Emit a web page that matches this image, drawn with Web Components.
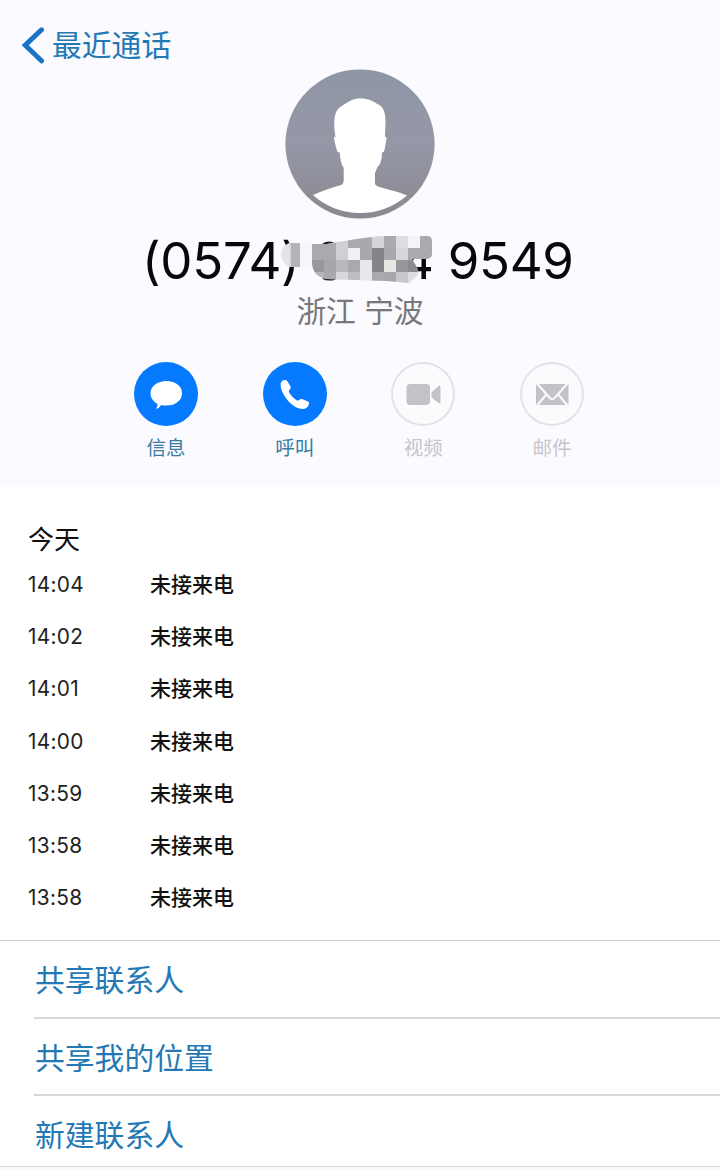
<!DOCTYPE html>
<html lang="zh-CN">
<head>
<meta charset="utf-8">
<title>最近通话</title>
<style>
    html{
        --themeColor:#2478b4;
        --lineColor:#d9d9db;
        font-family:Inter,"Noto Sans CJK SC",sans-serif;
        color:#111;
    }
    body{
        margin:0;
        background:#fff;
    }
</style>
</head>
<body>
<contact-page>
    <contact-header slot="header" place="浙江 宁波">
        <nav-back slot="nav">最近通话</nav-back>
        <contact-number slot="number"></contact-number>
        <contact-action slot="actions" icon="message">信息</contact-action>
        <contact-action slot="actions" icon="phone">呼叫</contact-action>
        <contact-action slot="actions" icon="video" disabled>视频</contact-action>
        <contact-action slot="actions" icon="mail" disabled>邮件</contact-action>
    </contact-header>
    <call-log day="今天">
        <call-item time="14:04">未接来电</call-item>
        <call-item time="14:02">未接来电</call-item>
        <call-item time="14:01">未接来电</call-item>
        <call-item time="14:00">未接来电</call-item>
        <call-item time="13:59">未接来电</call-item>
        <call-item time="13:58">未接来电</call-item>
        <call-item time="13:58">未接来电</call-item>
    </call-log>
    <menu-list slot="footer">
        <menu-item>共享联系人</menu-item>
        <menu-item>共享我的位置</menu-item>
        <menu-item>新建联系人</menu-item>
    </menu-list>
</contact-page>

<script>
class ContactPage extends HTMLElement {

    constructor() {
        super();
        const shadowRoot = this.attachShadow({ mode: 'open' });
        shadowRoot.innerHTML = `
        <style>
        :host{
            display:flex;
            flex-direction:column;
            width:720px;
            height:1170px;
            overflow:hidden;
        }
        main{
            flex:1;
        }
        </style>
        <slot name="header"></slot>
        <main><slot></slot></main>
        <slot name="footer"></slot>
        `
    }
}

class NavBack extends HTMLElement {

    constructor() {
        super();
        const shadowRoot = this.attachShadow({ mode: 'open' });
        shadowRoot.innerHTML = `
        <style>
        :host{
            display:flex;
            align-items:center;
            gap:6px;
            padding:26px 0 0 22px;
            height:38px;
            font-size:29.8px;
            line-height:40px;
            color:var(--themeColor);
        }
        svg{
            display:block;
        }
        </style>
        <svg width="24" height="38" viewBox="0 0 24 38"><path d="M19.5 3.8 3.2 19.200 19.5 34.800" fill="none" stroke="#1b72c8" stroke-width="5" stroke-linecap="round" stroke-linejoin="miter"/></svg>
        <span><slot></slot></span>
        `
    }
}

class ContactHeader extends HTMLElement {

    constructor() {
        super();
        const shadowRoot = this.attachShadow({ mode: 'open' });
        shadowRoot.innerHTML = `
        <style>
        :host{
            display:flex;
            flex-direction:column;
            height:486px;
            background:#fafaff;
        }
        .avatar{
            display:block;
            margin:5px auto 0;
        }
        .place{
            margin-top:2px;
            height:40px;
            font-size:29.7px;
            line-height:40px;
            text-align:center;
            color:#777779;
        }
        .actions{
            display:flex;
            justify-content:center;
            gap:64.6px;
            margin:31px 2px 0 0;
        }
        </style>
        <slot name="nav"></slot>
        <svg class="avatar" width="150" height="150" viewBox="0 0 150 150">
            <defs>
                <linearGradient id="bg" x1="0" y1="0" x2="0" y2="1">
                    <stop offset="0" stop-color="#8e96a5"/>
                    <stop offset=".5" stop-color="#9697a7"/>
                    <stop offset="1" stop-color="#89898f"/>
                </linearGradient>
            </defs>
            <circle cx="75" cy="75" r="74.6" fill="url(#bg)"/>
            <path fill="#fff" d="M76 29.5C83 29.5 88 32 92 34.800C98 37 100.500 43 100.500 52L100 68Q102 67 101.400 70L99.600 80.500Q99.200 83.500 97 83.500C96.800 90 96 95 92.500 98L90 104V115Q91 117 96 118.500C106 121 115 123.500 122 126.500C109 138 93 144 75 144C57 144 40 137 28 126C36 122 46 119 56 116Q58.500 115 58.700 112V99C56 95 55.200 90 54.800 83.500Q52 83.500 51.500 80L49 70Q48.500 67 50.500 68C49 58 48.500 50 51 43.500C53 38 60 35 64 32.500C68 30 72 29.500 76 29.500Z"/>
        </svg>
        <slot name="number"></slot>
        <div class="place"></div>
        <div class="actions"><slot name="actions"></slot></div>
        `
    }

    connectedCallback() {
        this.shadowRoot.querySelector('.place').textContent = this.getAttribute('place');
    }
}

// phone number with the middle digits pixelated
class ContactNumber extends HTMLElement {

    constructor() {
        super();
        const rows = [
            ['#aaa9ad', '#aaa9ad', '#d0cfd3', '#aaa9ad', '#a9a8ac', '#d5d4d8', '#aaa9ad', '#dddce0', '#f4f4f8', '#aaa9ad'],
            ['#aaa9ad', '#aaa9ad', '#d0cfd3', '#f1f1f3', '#a9a8ac', '#858488', '#a9a8ac', '#d8d7db', '#aaa9ad', '#a9a8ac'],
            ['#98979b', '#a7a6aa', '#b9b8bc', '#aaa9ad', '#e8e7eb', '#858488', '#e6e6e3', '#98979b', '#8c8b8f', ''],
            ['#b5b4b8', '#aaa9ad', '#d8d7db', '#bdbcc0', '#e8e7eb', '#aaa9ad', '#a8a7ab', '#c8c7cb', '#dddce0', '']
        ];
        // cells start at 312,236 on the page
        const cells = rows.map((row, y) => row.map((color, x) => color ? `<rect x="${31 + x * 12}" y="${1 + y * 12}" width="12.2" height="12.2" fill="${color}"/>` : '').join('')).join('');
        const shadowRoot = this.attachShadow({ mode: 'open' });
        shadowRoot.innerHTML = `
        <style>
        :host{
            display:block;
            position:relative;
            height:70px;
            font-size:51px;
            line-height:84px;
            color:#08080a;
            white-space:nowrap;
        }
        .number{
            display:flex;
            padding-left:142px;
        }
        .area{
            width:160px;
            letter-spacing:-.3px;
        }
        .last{
            margin-left:99px;
            letter-spacing:-.3px;
        }
        .mosaic{
            position:absolute;
            left:281px;
            top:16px;
        }
        </style>
        <div class="number"><span class="area">(0574)</span><span class="last">4 9549</span></div>
        <svg class="mosaic" width="156" height="50" viewBox="0 0 156 50">
            <defs><clipPath id="smear"><path d="M31 9H46C64 6 84 2 104 1H146Q151 1 151 6V19Q151 24 144 24H131L137 34V40L128 48L106 46 46 44Q32 42 31 28Z"/></clipPath></defs>
            <path d="M42 9.500Q47 6.500 52 8.500M42 43Q47 45.500 54 43.500" fill="none" stroke="#222" stroke-width="2.4"/>
            <path d="M8 8H19V32H8Q0 28 0 20Q0 11 8 8Z" fill="#e5e4e8"/>
            <path d="M8 8H19V32H8Z" fill="#d8d7db"/>
            <path d="M10 8H19V32H10Z" fill="#b4b3b7"/>
            <path d="M19 8H31V32H19Z" fill="#f5f5fa"/>
            <g clip-path="url(#smear)"><rect x="31" width="102" height="50" fill="#e2e1e5"/>${cells}</g>
        </svg>
        `
    }
}

const icons = {
    message: '<path d="M32.500 19C41.500 19 48 24 48 31.200S41.500 43.500 32.500 43.500Q29 43.500 27 42.900Q25 46.500 22 46.800Q24 44.500 23.500 41.800C19 39.500 16.500 35.500 16.500 31.200C16.500 24 23.500 19 32.500 19Z"/>',
    phone: '<path d="M19.500 18.600L22.600 17.900Q24 18 24.500 19.500L27.600 24.500Q28.200 26 27 27.200L26 28.500Q25.600 29.600 26.400 31Q29.500 35.700 33.500 38.200Q35 39 36 38.200Q37.500 36.600 39 37L45 39.600Q46.600 40.500 46 42L44.500 45Q42.500 47.200 39.500 47C35.500 46.800 31.500 45 27.500 41.300C22.500 36.500 18 29 17.700 24Q17.500 20 19.500 18.600Z"/>',
    video: '<rect x="15.500" y="22" width="23.500" height="21" rx="4"/><path d="M40.500 30.500 47.500 24Q49.500 22.800 49.500 25V40Q49.500 42.300 47.500 41L40.500 35.500Z"/>',
    mail: '<rect x="16" y="22" width="32.500" height="21"/><path d="M17 21.500 29.500 35.500Q32.200 38.500 35 35.500L47.500 21.500M17 43.500 26.300 32.500M47.500 43.500 38.200 32.500" fill="none" stroke="#fbfbfe" stroke-width="2"/>'
};

class ContactAction extends HTMLElement {

    static get observedAttributes() { return ['icon'] }

    constructor() {
        super();
        const shadowRoot = this.attachShadow({ mode: 'open' });
        shadowRoot.innerHTML = `
        <style>
        :host{
            display:flex;
            flex-direction:column;
            align-items:center;
            width:64px;
            font-size:19.5px;
            line-height:26px;
            color:#397ca2;
        }
        svg{
            box-sizing:border-box;
            width:64px;
            height:64px;
            margin-bottom:9px;
            border-radius:50%;
            background:#057aff;
            fill:#fff;
        }
        :host([disabled]){
            pointer-events:none;
            color:#c6c6ca;
        }
        :host([disabled]) svg{
            background:#fbfbfe;
            box-shadow:inset 0 0 0 2px #e3e3e7;
            fill:#c3c3c7;
        }
        </style>
        <svg viewBox="0 0 64 64"></svg>
        <span><slot></slot></span>
        `
    }

    attributeChangedCallback (name, oldValue, newValue) {
        if( name == 'icon' ){
            this.shadowRoot.querySelector('svg').innerHTML = icons[newValue] || '';
        }
    }
}

class CallLog extends HTMLElement {

    constructor() {
        super();
        const shadowRoot = this.attachShadow({ mode: 'open' });
        shadowRoot.innerHTML = `
        <style>
        :host{
            display:block;
            padding:35px 28px 0;
        }
        h2{
            margin:0;
            height:38px;
            font-size:26px;
            font-weight:400;
            line-height:38px;
        }
        </style>
        <h2></h2>
        <slot></slot>
        `
    }

    connectedCallback() {
        this.shadowRoot.querySelector('h2').textContent = this.getAttribute('day');
    }
}

class CallItem extends HTMLElement {

    constructor() {
        super();
        const shadowRoot = this.attachShadow({ mode: 'open' });
        shadowRoot.innerHTML = `
        <style>
        :host{
            display:grid;
            grid-template-columns:122px 1fr;
            height:52.2px;
            line-height:52px;
        }
        time{
            font-size:20.8px;
            letter-spacing:.3px;
            color:#222;
        }
        span{
            font-size:21px;
            font-weight:500;
        }
        </style>
        <time></time>
        <span><slot></slot></span>
        `
    }

    connectedCallback() {
        this.shadowRoot.querySelector('time').textContent = this.getAttribute('time');
    }
}

class MenuList extends HTMLElement {

    constructor() {
        super();
        const shadowRoot = this.attachShadow({ mode: 'open' });
        shadowRoot.innerHTML = `
        <style>
        :host{
            display:block;
            height:225px;
            border-top:1px solid #ccccce;
            border-bottom:1px solid #d4d8da;
            box-shadow:0 3px 0 #f6f8f9;
            margin-bottom:3px;
        }
        </style>
        <slot></slot>
        `
    }
}

class MenuItem extends HTMLElement {

    constructor() {
        super();
        const shadowRoot = this.attachShadow({ mode: 'open' });
        shadowRoot.innerHTML = `
        <style>
        :host{
            display:block;
            box-sizing:border-box;
            height:77px;
            margin-left:34px;
            padding-left:1px;
            border-bottom:2px solid var(--lineColor);
            font-size:29.8px;
            line-height:79px;
            color:var(--themeColor);
            cursor:pointer;
        }
        :host(:first-of-type){
            height:78px;
        }
        :host(:last-of-type){
            height:70px;
            border-bottom:0;
        }
        </style>
        <slot></slot>
        `
    }
}

customElements.define('contact-page', ContactPage);
customElements.define('nav-back', NavBack);
customElements.define('contact-header', ContactHeader);
customElements.define('contact-number', ContactNumber);
customElements.define('contact-action', ContactAction);
customElements.define('call-log', CallLog);
customElements.define('call-item', CallItem);
customElements.define('menu-list', MenuList);
customElements.define('menu-item', MenuItem);
</script>
</body>
</html>
